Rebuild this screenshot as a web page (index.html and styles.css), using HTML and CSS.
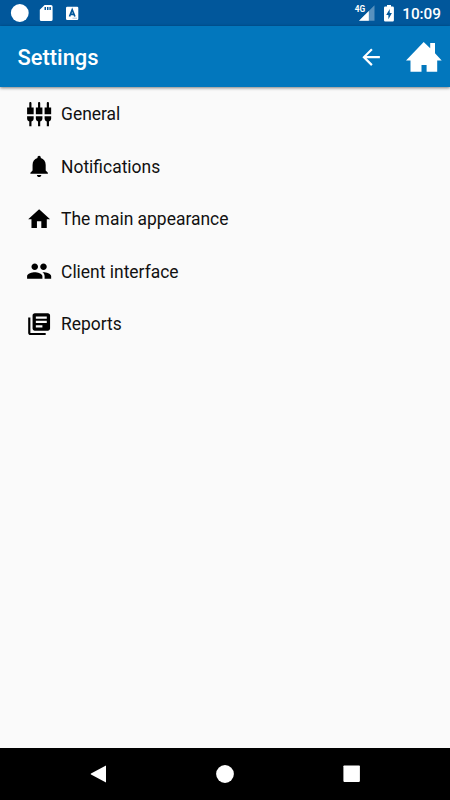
FILE: index.html
```html
<!DOCTYPE html>
<html lang="en">
<head>
<meta charset="utf-8">
<title>Settings</title>
<link rel="stylesheet" href="styles.css">
</head>
<body>
<div class="screen">
  <div class="status">
    <svg class="status-left" viewBox="0 0 90 26">
      <circle cx="19.8" cy="13" r="8.9"/>
      <path d="M44.6 5H51a1.6 1.6 0 0 1 1.6 1.6v12.8A1.6 1.6 0 0 1 51 21H41.4a1.6 1.6 0 0 1-1.6-1.6V9.8z"/>
      <path class="cut" d="M44.5 7h1.5v3h-1.5zM47 7h1.5v3H47zM49.4 7h1.5v3h-1.5z"/>
      <rect x="66" y="6.8" width="12.3" height="13.2" rx="1.2"/>
      <path class="cut letter" d="M69.5 16.5 72.2 9.8 74.9 16.5M70.5 14.4h3.4"/>
      <path class="dots" d="M72.5 18.2h4.5"/>
    </svg>
    <div class="status-right">
      <span class="network">4G</span>
      <svg class="signal" viewBox="0 0 16 16"><path class="faint" d="M15.5.3V15.8H0z"/><path d="M9.8 6V15.8H0z"/></svg>
      <svg class="battery" viewBox="0 0 10 17"><path d="M3 0h4v1.5h1.7A1.2 1.2 0 0 1 9.9 2.7v12.6a1.2 1.2 0 0 1-1.2 1.2H1.2A1.2 1.2 0 0 1 0 15.3V2.7A1.2 1.2 0 0 1 1.2 1.5H3z"/><path class="cut" d="M5.7 3.9 2.2 10h2.2v4.3L7.9 8.1H5.7z"/></svg>
      <span class="clock">10:09</span>
    </div>
  </div>
  <header class="toolbar">
    <h1>Settings</h1>
    <svg class="back" viewBox="0 0 24 24"><path d="M20 11H7.830l5.590-5.590L12 4l-8 8 8 8 1.410-1.410L7.830 13H20v-2z"/></svg>
    <svg class="home" viewBox="0 0 36 30"><path d="M17.7 0 24.2 6.3V1H29v10.2L35.7 18.5H31.2V29.8H20.600V23H15.500V29.800H4.500V18.500H0z"/></svg>
  </header>
  <main>
    <div class="row"><svg viewBox="0 0 24 24"><path d="M5 2c0-.55-.45-1-1-1s-1 .45-1 1v4H1v6h6V6H5V2zm4 14c0 1.300.840 2.400 2 2.820V23h2v-4.180c1.160-.41 2-1.510 2-2.820v-2H9v2zm-8 0c0 1.300.840 2.400 2 2.820V23h2v-4.180C6.160 18.400 7 17.300 7 16v-2H1v2zM21 6V2c0-.55-.45-1-1-1s-1 .45-1 1v4h-2v6h6V6h-2zm-8-4c0-.55-.45-1-1-1s-1 .45-1 1v4H9v6h6V6h-2V2zm4 14c0 1.300.840 2.400 2 2.820V23h2v-4.180c1.160-.41 2-1.510 2-2.820v-2h-6v2z"/></svg><span>General</span></div>
    <div class="row"><svg viewBox="0 0 24 24"><path d="M12 22c1.100 0 2-.9 2-2h-4c0 1.100.890 2 2 2zm6-6v-5c0-3.070-1.640-5.640-4.500-6.320V4c0-.83-.67-1.500-1.500-1.500s-1.500.67-1.500 1.500v.68C7.630 5.360 6 7.920 6 11v5l-2 2v1h16v-1l-2-2z"/></svg><span>Notifications</span></div>
    <div class="row"><svg viewBox="0 0 24 24"><path d="M10 20v-6h4v6h5v-8h3L12 3 2 12h3v8z"/></svg><span>The main appearance</span></div>
    <div class="row"><svg viewBox="0 0 24 24"><path d="M16 11c1.660 0 2.990-1.340 2.990-3S17.660 5 16 5s-3 1.340-3 3 1.340 3 3 3zm-8 0c1.660 0 2.990-1.340 2.990-3S9.660 5 8 5 5 6.340 5 8s1.340 3 3 3zm0 2c-2.330 0-7 1.170-7 3.500V19h14v-2.500c0-2.330-4.670-3.500-7-3.500zm8 0c-.29 0-.62.02-.97.05 1.160.84 1.970 1.970 1.970 3.450V19h6v-2.500c0-2.330-4.670-3.500-7-3.500z"/></svg><span>Client interface</span></div>
    <div class="row"><svg viewBox="0 0 24 24"><path d="M4 6H2v14c0 1.100.9 2 2 2h14v-2H4V6zm16-4H8c-1.100 0-2 .9-2 2v12c0 1.100.9 2 2 2h12c1.100 0 2-.9 2-2V4c0-1.100-.9-2-2-2zm-1 9H9V9h10v2zm-4 4H9v-2h6v2zm4-8H9V5h10v2z"/></svg><span>Reports</span></div>
  </main>
  <nav class="navbar">
    <svg viewBox="0 0 18 18"><path d="M16 0.500V17.500L1 9.500Q.3 9 1 8.500z"/></svg>
    <svg viewBox="0 0 18 18"><circle cx="9" cy="9" r="8.900"/></svg>
    <svg viewBox="0 0 18 18"><rect x=".4" y=".4" width="16.500" height="16.500" rx=".8"/></svg>
  </nav>
</div>
</body>
</html>
```
FILE: styles.css
```css
* { box-sizing: border-box; }
body { margin: 0; font-family: Roboto, sans-serif; }
svg { display: block; flex: none; fill: currentColor; }
.screen { width: 450px; height: 800px; display: flex; flex-direction: column; background: #fafafa; overflow: hidden; }
.status { height: 26px; flex: none; display: flex; justify-content: space-between; background: #01579b; color: #fff; }
.status-left { width: 90px; height: 26px; }
.cut { fill: #01579b; }
.letter { fill: none; stroke: #01579b; stroke-width: 1.7; }
.dots { stroke: #a9c3dc; stroke-width: 1; }
.status-right { display: flex; align-items: flex-start; padding-right: 9px; }
.network { font-size: 8.3px; line-height: 10px; font-weight: 700; margin: 4px -6px 0 0; }
.signal { width: 16px; height: 16px; margin: 5px 9px 0 0; }
.faint { opacity: .35; }
.battery { width: 10px; height: 17px; margin: 5px 8px 0 0; }
.clock { font-size: 15.3px; line-height: 26px; font-weight: 500; margin-top: 1px; }
.toolbar { height: 61.3px; flex: none; display: flex; align-items: center; padding: 0 8px 0 17.5px; background: #0277bd; color: #fff; box-shadow: 0 1px 3px rgba(0,0,0,.5); }
h1 { margin: 3px auto 0 0; font-size: 21.9px; line-height: 28px; font-weight: 500; }
.back { width: 26.25px; height: 26.25px; margin-right: 22px; }
.home { width: 36px; height: 30px; }
main { flex: 1; padding-top: .2px; color: #000; }
.row { height: 52.5px; display: flex; align-items: center; padding-left: 26.2px; gap: 8.6px; font-size: 17.5px; line-height: 24px; color: #111; }
.row svg { width: 26.25px; height: 26.25px; color: #000; }
.row span { padding-top: 1.4px; font-size: 17.45px; }
.navbar { height: 52.5px; flex: none; display: flex; align-items: center; justify-content: space-between; padding: 0 89.5px; background: #000; color: #fff; }
.navbar svg { width: 18px; height: 18px; }
```
